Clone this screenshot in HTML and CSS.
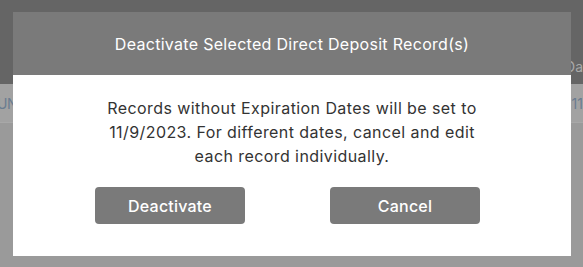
FILE: index.html
```html
<!DOCTYPE html>
<html>
<head>
<meta charset="utf-8">
<link rel="stylesheet" href="styles.css">
</head>
<body>
<div class="page">
  <div class="page-top">
    <span class="col-head">Da</span>
  </div>
  <div class="page-row">
    <span class="cell-left">UN</span>
    <span class="cell-right">11</span>
  </div>
  <div class="page-rest"></div>
</div>
<div class="modal">
  <div class="modal-header">Deactivate Selected Direct Deposit Record(s)</div>
  <div class="modal-body">
    <p class="message">Records without Expiration Dates will be set to<br>11/9/2023. For different dates, cancel and edit<br>each record individually.</p>
    <div class="actions">
      <button class="btn">Deactivate</button>
      <button class="btn">Cancel</button>
    </div>
  </div>
</div>
</body>
</html>
```
FILE: styles.css
```css
html, body {
  margin: 0;
  padding: 0;
  width: 583px;
  height: 267px;
  overflow: hidden;
  font-family: "Inter", "Noto Sans", sans-serif;
}
.page {
  display: flex;
  flex-direction: column;
  height: 267px;
  background: #9a9a9a;
}
.page-top {
  height: 84px;
  background: #656565;
  display: flex;
  justify-content: flex-end;
  align-items: flex-end;
}
.col-head {
  color: #a9a9a9;
  font-size: 14px;
  margin-right: 0;
  margin-bottom: 9px;
}
.page-row {
  height: 38px;
  background: #a2a2a2;
  border-bottom: 1px solid #a8a8a8;
  display: flex;
  justify-content: space-between;
  align-items: center;
  font-size: 14px;
  color: #6a7c90;
}
.cell-left { margin-left: -3px; letter-spacing: -0.5px; }
.cell-right { margin-right: 0; }
.modal {
  position: absolute;
  left: 13px;
  top: 12px;
  width: 558px;
  background: #fff;
}
.modal-header {
  height: 63px;
  background: #7a7a7a;
  color: #fff;
  font-size: 16px;
  font-weight: 400;
  letter-spacing: 0.3px;
  display: flex;
  align-items: center;
  justify-content: center;
}
.modal-body {
  padding: 21px 0 32px;
}
.message {
  margin: 0;
  text-align: center;
  font-size: 16px;
  line-height: 24px;
  letter-spacing: 0.42px;
  color: #333;
}
.actions {
  display: flex;
  justify-content: center;
  gap: 85px;
  margin-top: 19px;
  padding-right: 9px;
}
.btn {
  width: 150px;
  height: 37px;
  border: none;
  border-radius: 4px;
  background: #7a7a7a;
  color: #fff;
  font-family: inherit;
  font-size: 16px;
  font-weight: 500;
  letter-spacing: 0.2px;
}
```
